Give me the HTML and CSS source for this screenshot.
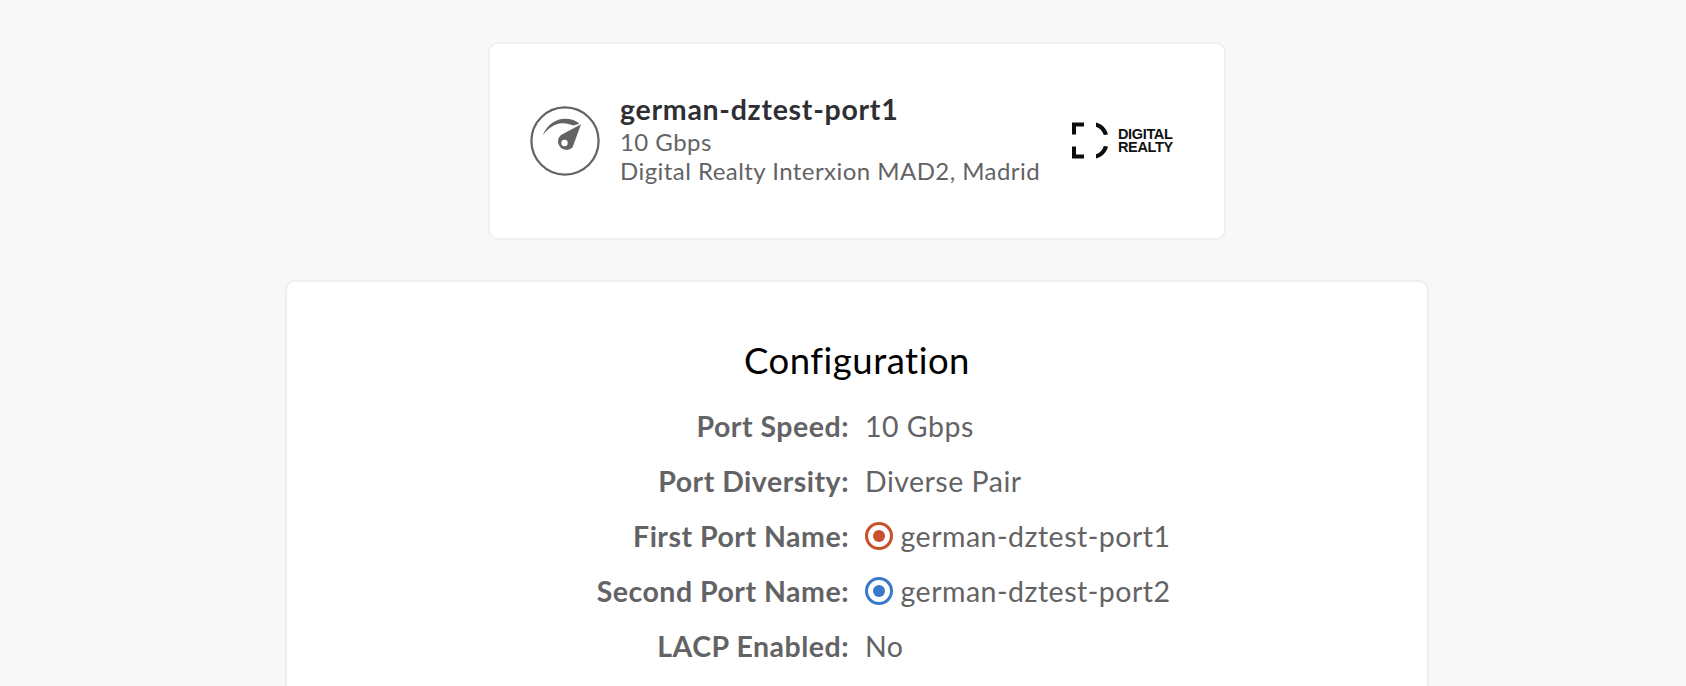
FILE: index.html
```html
<!DOCTYPE html>
<html lang="en">
<head>
<meta charset="utf-8">
<title>Configuration</title>
<link rel="stylesheet" href="styles.css">
</head>
<body>
<main class="page">
  <section class="port-card">
    <svg class="speed-icon" viewBox="0 0 70 70" aria-hidden="true">
      <circle cx="35" cy="35" r="33.6" fill="none" stroke="#636366" stroke-width="2.2"/>
      <path d="M12.7 29.3 C17 18.5 26 12.7 35 12.7 C41 12.7 46 14.5 49.3 17.7 L43.5 19.6 C40 18 36 17 32 17.2 C25 17.6 18 22 12.7 29.3 Z" fill="#636366"/>
      <path d="M51 18.3 L42.5 41.5 A8.5 8.5 0 1 1 31 29 Z" fill="#636366"/>
      <circle cx="34.5" cy="37" r="3.2" fill="#fff"/>
    </svg>
    <div class="port-text">
      <div class="port-name">german-dztest-port1</div>
      <div class="port-line">10 Gbps</div>
      <div class="port-line">Digital Realty Interxion MAD2, Madrid</div>
    </div>
    <div class="logo">
      <svg class="logo-mark" viewBox="0 0 36 36" aria-hidden="true">
        <path d="M0 0H12V4H4V12H0Z" fill="#0c0c0c"/>
        <path d="M0 24H4V32H12V36H0Z" fill="#0c0c0c"/>
        <path d="M24 0C30 1.5 34.5 6 36 12L31.8 12.6C30.6 8.4 27.6 5.4 24 4.2Z" fill="#0c0c0c"/>
        <path d="M36 24C34.5 30 30 34.5 24 36V31.8C27.6 30.6 30.6 27.6 31.8 23.4Z" fill="#0c0c0c"/>
      </svg>
      <div class="logo-text">DIGITAL<br>REALTY</div>
    </div>
  </section>

  <section class="config-card">
    <h2 class="config-title">Configuration</h2>
    <dl class="config-list">
      <div class="config-row"><dt>Port Speed:</dt><dd>10 Gbps</dd></div>
      <div class="config-row"><dt>Port Diversity:</dt><dd>Diverse Pair</dd></div>
      <div class="config-row"><dt>First Port Name:</dt><dd><span class="dot dot-red"></span>german-dztest-port1</dd></div>
      <div class="config-row"><dt>Second Port Name:</dt><dd><span class="dot dot-blue"></span>german-dztest-port2</dd></div>
      <div class="config-row"><dt>LACP Enabled:</dt><dd>No</dd></div>
    </dl>
  </section>
</main>
</body>
</html>
```
FILE: styles.css
```css
* { box-sizing: border-box; }
html, body { margin: 0; height: 100%; overflow: hidden; }
body {
  background: #f8f8f8;
  font-family: "Lato", "Open Sans", sans-serif;
  color: #636366;
}
.page {
  display: flex;
  flex-direction: column;
  align-items: center;
  gap: 40px;
  padding: 42px 0 0 28px;
}
.port-card, .config-card {
  background: #fff;
  border: 2px solid #eeeef5;
  border-radius: 10px;
}
.port-card {
  width: 738px;
  height: 198px;
  display: flex;
  align-items: center;
  padding: 0 0 0 40px;
}
.speed-icon { width: 70px; height: 70px; flex: none; margin-right: 20px; }
.port-text { width: 419px; flex: none; margin-top: -5px; white-space: nowrap; }
.port-name { font-size: 28.5px; font-weight: 700; line-height: 34px; margin-bottom: 1px; color: #2f2f33; letter-spacing: 0.72px; }
.port-line { font-size: 24px; line-height: 29.5px; letter-spacing: 0.45px; }
.logo { display: flex; align-items: center; gap: 10px; margin-left: 33px; margin-top: -1px; }
.logo-mark { width: 36px; height: 37px; flex: none; }
.logo-text { font-family: "Liberation Sans", sans-serif; font-weight: 700; font-size: 14.5px; line-height: 13px; color: #111; letter-spacing: -0.35px; }
.config-card {
  width: 1144px;
  height: 700px;
  padding-top: 56px;
}
.config-title {
  margin: 0 0 16px;
  text-align: center;
  font-size: 36.5px;
  font-weight: 400;
  line-height: 44px;
  color: #000;
  letter-spacing: 0.5px;
}
.config-list { margin: 0; }
.config-row {
  display: grid;
  grid-template-columns: 562px 1fr;
  column-gap: 16px;
  height: 55px;
  align-items: center;
  font-size: 28.5px;
  letter-spacing: 0.5px;
}
.config-row dt { font-weight: 700; text-align: right; }
.config-row dd { margin: 0; display: flex; align-items: center; font-weight: 400; }
.dot {
  width: 28px;
  height: 28px;
  flex: none;
  margin-right: 7.5px;
  border: 3px solid currentColor;
  border-radius: 50%;
  display: flex;
  align-items: center;
  justify-content: center;
}
.dot::after { content: ""; width: 12px; height: 12px; border-radius: 50%; background: currentColor; }
.dot-red { color: #c9502a; }
.dot-blue { color: #3a78c9; }
```
